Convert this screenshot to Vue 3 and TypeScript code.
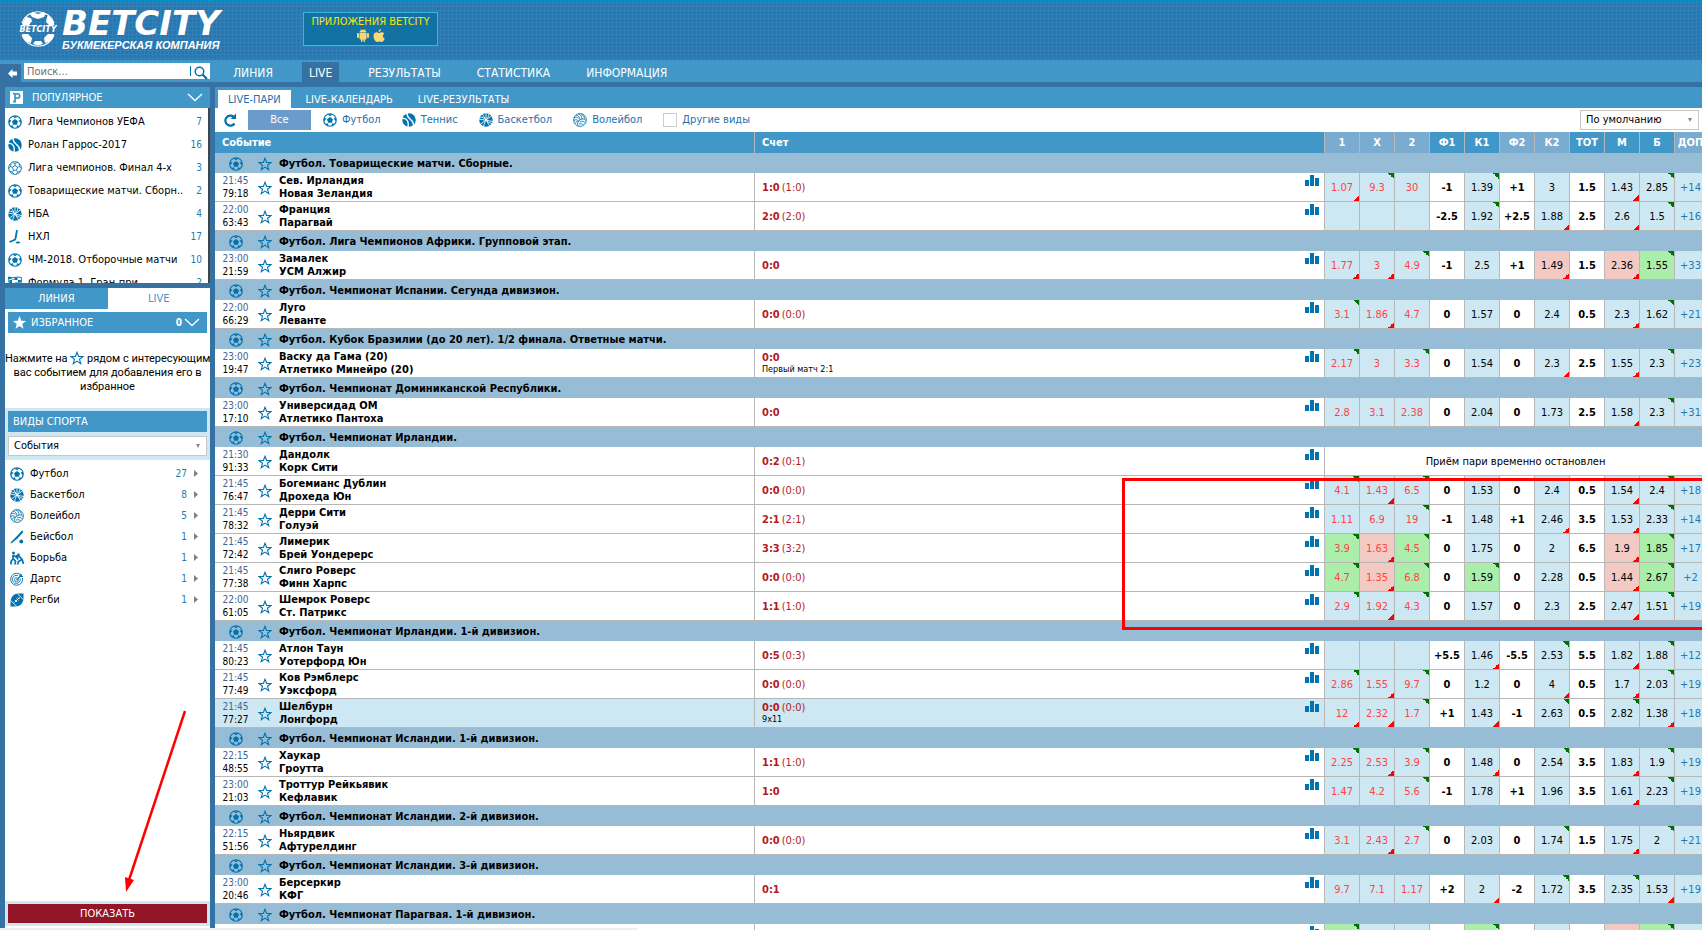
<script setup lang="ts">
import { ref } from 'vue'

type Mark = '' | 'up' | 'down'
type Tone = '' | 'rise' | 'fall'
interface Odd { value: string; mark: Mark; tone: Tone }
interface Match {
  start: string
  clock: string
  home: string
  away: string
  score: string
  half: string
  note: string
  odds: Odd[]
  extra: string
  active: boolean
}
interface League { title: string; matches: Match[] }

// Each odd is "value" + flags: ^ up corner, v down corner, g green cell, p pink cell; "_" is an empty cell
function parseOdd(raw: string): Odd {
  return {
    value: raw.replace(/[\^vgp_]/g, ''),
    mark: raw.includes('^') ? 'up' : raw.includes('v') ? 'down' : '',
    tone: raw.includes('g') ? 'rise' : raw.includes('p') ? 'fall' : '',
  }
}

function match(times: string, home: string, away: string, score: string, odds: string, extra: string, note = '', active = false): Match {
  const [start = '', clock = ''] = times.split(' ')
  const [main = '', half = ''] = score.split(' ')
  return {
    start, clock, home, away, score: main, half, note, extra, active,
    odds: odds ? odds.split(' ').map(parseOdd) : [],
  }
}

const columns = ['1', 'X', '2', 'Ф1', 'К1', 'Ф2', 'К2', 'ТОТ', 'М', 'Б', 'ДОП']
const paleColumns = [0, 1, 2, 5, 6, 10]
const boldColumns = [3, 5, 7]

const leagues: League[] = [
  { title: 'Футбол. Товарищеские матчи. Сборные.', matches: [
    match('21:45 79:18', 'Сев. Ирландия', 'Новая Зеландия', '1:0 (1:0)', '1.07v 9.3^ 30 -1 1.39^ +1 3 1.5 1.43v 2.85^', '+14'),
    match('22:00 63:43', 'Франция', 'Парагвай', '2:0 (2:0)', '_ _ _ -2.5 1.92^ +2.5 1.88v 2.5 2.6v 1.5^', '+16'),
  ] },
  { title: 'Футбол. Лига Чемпионов Африки. Групповой этап.', matches: [
    match('23:00 21:59', 'Замалек', 'УСМ Алжир', '0:0', '1.77v 3v 4.9^ -1 2.5 +1 1.49vp 1.5 2.36vp 1.55^g', '+33'),
  ] },
  { title: 'Футбол. Чемпионат Испании. Сегунда дивизион.', matches: [
    match('22:00 66:29', 'Луго', 'Леванте', '0:0 (0:0)', '3.1^ 1.86v 4.7 0 1.57 0 2.4 0.5 2.3v 1.62^', '+21'),
  ] },
  { title: 'Футбол. Кубок Бразилии (до 20 лет). 1/2 финала. Ответные матчи.', matches: [
    match('23:00 19:47', 'Васку да Гама (20)', 'Атлетико Минейро (20)', '0:0', '2.17^ 3 3.3^ 0 1.54 0 2.3v 2.5 1.55v 2.3^', '+23', 'Первый матч 2:1'),
  ] },
  { title: 'Футбол. Чемпионат Доминиканской Республики.', matches: [
    match('23:00 17:10', 'Универсидад ОМ', 'Атлетико Пантоха', '0:0', '2.8 3.1 2.38 0 2.04 0 1.73 2.5 1.58v 2.3^', '+31'),
  ] },
  { title: 'Футбол. Чемпионат Ирландии.', matches: [
    match('21:30 91:33', 'Дандолк', 'Корк Сити', '0:2 (0:1)', '', ''),
    match('21:45 76:47', 'Богемианс Дублин', 'Дрохеда Юн', '0:0 (0:0)', '4.1^ 1.43v 6.5^ 0 1.53 0 2.4 0.5 1.54v 2.4^', '+18'),
    match('21:45 78:32', 'Дерри Сити', 'Голуэй', '2:1 (2:1)', '1.11 6.9 19^ -1 1.48 +1 2.46v 3.5 1.53v 2.33^', '+14'),
    match('21:45 72:42', 'Лимерик', 'Брей Уондерерс', '3:3 (3:2)', '3.9^g 1.63vp 4.5^g 0 1.75 0 2 6.5 1.9vp 1.85^g', '+17'),
    match('21:45 77:38', 'Слиго Роверс', 'Финн Харпс', '0:0 (0:0)', '4.7^g 1.35vp 6.8^g 0 1.59^g 0 2.28 0.5 1.44vp 2.67^g', '+2'),
    match('22:00 61:05', 'Шемрок Роверс', 'Ст. Патрикс', '1:1 (1:0)', '2.9^ 1.92v 4.3^ 0 1.57 0 2.3 2.5 2.47v 1.51^', '+19'),
  ] },
  { title: 'Футбол. Чемпионат Ирландии. 1-й дивизион.', matches: [
    match('21:45 80:23', 'Атлон Таун', 'Уотерфорд Юн', '0:5 (0:3)', '_ _ _ +5.5 1.46v -5.5 2.53^ 5.5 1.82v 1.88^', '+12'),
    match('21:45 77:49', 'Ков Рэмблерс', 'Уэксфорд', '0:0 (0:0)', '2.86^ 1.55v 9.7^ 0 1.2 0 4v 0.5 1.7v 2.03^', '+19'),
    match('21:45 77:27', 'Шелбурн', 'Лонгфорд', '0:0 (0:0)', '12v 2.32v 1.7^ +1 1.43v -1 2.63^ 0.5 2.82^ 1.38v', '+18', '9x11', true),
  ] },
  { title: 'Футбол. Чемпионат Исландии. 1-й дивизион.', matches: [
    match('22:15 48:55', 'Хаукар', 'Гроутта', '1:1 (1:0)', '2.25^ 2.53v 3.9^ 0 1.48v 0 2.54^ 3.5 1.83v 1.9^', '+19'),
    match('23:00 21:03', 'Троттур Рейкьявик', 'Кефлавик', '1:0', '1.47 4.2 5.6^ -1 1.78 +1 1.96 3.5 1.61v 2.23^', '+19'),
  ] },
  { title: 'Футбол. Чемпионат Исландии. 2-й дивизион.', matches: [
    match('22:15 51:56', 'Ньярдвик', 'Афтурелдинг', '0:0 (0:0)', '3.1 2.43v 2.7^ 0 2.03 0 1.74^ 1.5 1.75v 2^', '+21'),
  ] },
  { title: 'Футбол. Чемпионат Исландии. 3-й дивизион.', matches: [
    match('23:00 20:46', 'Берсеркир', 'КФГ', '0:1', '9.7 7.1 1.17 +2 2v -2 1.72^ 3.5 2.35^ 1.53v', '+19'),
  ] },
  { title: 'Футбол. Чемпионат Парагвая. 1-й дивизион.', matches: [
    match('', '', '', '', '_^g _ _ _ _^g _ _ _ _p _^g', ''),
  ] },
]

const menu = ['ЛИНИЯ', 'LIVE', 'РЕЗУЛЬТАТЫ', 'СТАТИСТИКА', 'ИНФОРМАЦИЯ']
const liveTabs = ['LIVE-ПАРИ', 'LIVE-КАЛЕНДАРЬ', 'LIVE-РЕЗУЛЬТАТЫ']
const filters = [
  { icon: 'football', name: 'Футбол' },
  { icon: 'tennis', name: 'Теннис' },
  { icon: 'basketball', name: 'Баскетбол' },
  { icon: 'volleyball', name: 'Волейбол' },
]
const popular = [
  { icon: 'football', name: 'Лига Чемпионов УЕФА', count: 7 },
  { icon: 'tennis', name: 'Ролан Гаррос-2017', count: 16 },
  { icon: 'handball', name: 'Лига чемпионов. Финал 4-х', count: 3 },
  { icon: 'football', name: 'Товарищеские матчи. Сборн..', count: 2 },
  { icon: 'basketball', name: 'НБА', count: 4 },
  { icon: 'hockey', name: 'НХЛ', count: 17 },
  { icon: 'football', name: 'ЧМ-2018. Отборочные матчи', count: 10 },
  { icon: 'flag', name: 'Формула 1. Гран-при', count: 2 },
]
const sports = [
  { icon: 'football', name: 'Футбол', count: 27 },
  { icon: 'basketball', name: 'Баскетбол', count: 8 },
  { icon: 'volleyball', name: 'Волейбол', count: 5 },
  { icon: 'baseball', name: 'Бейсбол', count: 1 },
  { icon: 'wrestling', name: 'Борьба', count: 1 },
  { icon: 'darts', name: 'Дартс', count: 1 },
  { icon: 'rugby', name: 'Регби', count: 1 },
]

const query = ref('')
const otherSports = ref(false)
</script>

<template>
  <div class="page">
    <svg class="sprite" aria-hidden="true">
      <symbol id="i-football" viewBox="0 0 28 28">
        <circle cx="14" cy="14" r="12.6" fill="none" stroke="currentColor" stroke-width="2.200" />
        <path fill="currentColor" d="M14 8l6 4.500-2.200 7h-7.600L8 12.500zM8 2.400h12l-6 4zM1.500 9.500l5.500 1.300-4.500 6zM26.500 9.500l-5.500 1.300 4.500 6zM4.500 22l5.600-1.700.8 6zM23.500 22l-5.600-1.700-.8 6z" />
      </symbol>
      <symbol id="i-tennis" viewBox="0 0 28 28">
        <circle cx="14" cy="14" r="13.500" fill="currentColor" />
        <path fill="none" stroke="#fff" stroke-width="2.800" d="M10 0c0 7 2 9 6 12s8 7 7 14M0 11c6-1 9 1 11 5s2 7 1 12" />
      </symbol>
      <symbol id="i-basketball" viewBox="0 0 28 28">
        <circle cx="14" cy="14" r="13.500" fill="currentColor" />
        <path fill="none" stroke="#fff" stroke-width="1.700" d="M6 1l16 26M26 5L2 23M14 0v12M0 12l28 5M9 28c1-6 3-10 5-14M20 2c-1 5-3 9-6 12M1 8c6 0 10 2 13 6M27 21c-6-1-10-3-13-7" />
      </symbol>
      <symbol id="i-volleyball" viewBox="0 0 28 28">
        <g fill="none" stroke="currentColor" stroke-width="1.700">
          <circle cx="14" cy="14" r="12.800" />
          <path d="M14 14c0-5-3-9-8-10M14 14c4-3 9-3 12 1M14 14c-4 2-6 7-4 12M11 1.500c5 2 7 6 7 11M16 1.500c5 3 7 6 7 10M2 10c3-2 6-2 9 .5M1.500 15c4-2 7-2 10 1M25 20c-4-4-7-4-11-2M21 24c-2-3-5-3-9-2M4 21c1-2 3-4 6-5" />
        </g>
      </symbol>
      <symbol id="i-handball" viewBox="0 0 28 28">
        <g fill="none" stroke="currentColor" stroke-width="1.700">
          <circle cx="14" cy="14" r="12.800" />
          <path d="M14 9l5 3.500-2 6h-6l-2-6zM14 9V5M19 12.500l4-1.500M17 18.500l2.500 4M11 18.500l-2.500 4M9 12.500L5 11M14 5L9 3M14 5l5-2M23 11l-1-6M23 11l3.500 4M5 11L6 5M5 11l-3.500 4M8.500 22.500L3 20M8.500 22.500L12 26M19.500 22.500L25 20M19.500 22.500L16 26" />
        </g>
      </symbol>
      <symbol id="i-hockey" viewBox="0 0 28 28">
        <path fill="none" stroke="currentColor" stroke-width="3.600" stroke-linejoin="round" d="M18 0l-3 17c-.6 2.500-2 3.500-4 3.500L3 24" />
        <ellipse cx="20" cy="25" rx="4.500" ry="2.200" fill="currentColor" />
      </symbol>
      <symbol id="i-flag" viewBox="0 0 28 28">
        <path fill="currentColor" d="M1 2h6v5h6V3h6v5h7v5h-5v5h5v5h-6v-5h-7v5H7v-4H3V8h5v6h6V8H7V6H1zM14 13h6V8h-6z" />
        <path fill="none" stroke="currentColor" stroke-width="1.800" d="M1 2c9 4 16-2 26 1l-1 19c-8-2-12 3-20 0L3 28z" />
      </symbol>
      <symbol id="i-baseball" viewBox="0 0 28 28">
        <path fill="currentColor" d="M24 1c2 0 3 2 2 4L15 17 5 25l-2 2-2-2 2-2L13 13z" />
        <circle cx="22.500" cy="23" r="3.800" fill="currentColor" />
      </symbol>
      <symbol id="i-wrestling" viewBox="0 0 28 28">
        <circle cx="7" cy="4" r="3" fill="currentColor" />
        <circle cx="17" cy="8" r="2.800" fill="currentColor" />
        <path fill="none" stroke="currentColor" stroke-width="3.400" stroke-linejoin="round" d="M6 8v8l-4 5v6M6 15l5 5-1 7M7 9l7 4 2 4M19 11l5 6-7 4-2 6M24 16l3 10M12 9l7 3" />
      </symbol>
      <symbol id="i-darts" viewBox="0 0 28 28">
        <g fill="none" stroke="currentColor" stroke-width="1.800">
          <path d="M18 3.500A12 12 0 1 0 25 12" />
          <path d="M16 7.500A8 8 0 1 0 20.500 13M14 11.500a4 4 0 1 0 3 3.500" />
          <path stroke-width="2.400" d="M13 16L24 5M20 3v6h6" />
        </g>
      </symbol>
      <symbol id="i-rugby" viewBox="0 0 28 28">
        <path fill="currentColor" d="M17 1h10v10C26 21 20 27 11 27H1V17C2 7 8 1 17 1z" />
        <path fill="none" stroke="#fff" stroke-width="1.700" d="M15 1.500L26.500 13M1.500 15L13 26.500M9 19L19 9M10 14l4 4M13 11l4 4M16 9l3 3" />
      </symbol>
      <symbol id="i-star" viewBox="0 0 28 28">
        <path fill="none" stroke="currentColor" stroke-width="2.200" d="M14 2.500l3.200 8.300 8.800.3-7 5.500 2.500 8.600L14 20.200l-7.500 5 2.500-8.600-7-5.500 8.800-.3z" />
      </symbol>
      <symbol id="i-bars" viewBox="0 0 14 11">
        <path fill="currentColor" d="M0 5h4v6H0zM5 0h4v11H5zM10 3h4v8h-4z" />
      </symbol>
      <symbol id="i-chevron" viewBox="0 0 16 9">
        <path fill="none" stroke="currentColor" stroke-width="1.300" d="M1 1l7 6.500L15 1" />
      </symbol>
    </svg>

    <header class="top">
      <a class="brand" href="#">
        <svg class="globe" viewBox="0 0 36 36" aria-hidden="true">
          <path fill="none" stroke="#fff" stroke-width="1.200" d="M2 12A17 17 0 0 1 34 12M2 24A17 17 0 0 0 34 24" />
          <path fill="#fff" d="M13 1.500L18 3l5-1.500 3 1-2 3.500-6 2-6-2-2-3zM28 4l5 6 1.500 4-4.500 1-4-4 1-5zM2 13l4-7 5 1 1 3-3 4-5 1zM2 23h6l4 4-1 5-4-1-4-4zM34 23h-6l-4 4 1 5 4-1 4-4zM13 33l2-3h6l2 3-5 1.500z" />
          <text x="18" y="21" text-anchor="middle">BETCITY</text>
        </svg>
        <span class="brand-words">
          <span class="brand-name">BETCITY</span>
          <span class="brand-sub">БУКМЕКЕРСКАЯ КОМПАНИЯ</span>
        </span>
      </a>
      <a class="apps" href="#">
        <span>ПРИЛОЖЕНИЯ BETCITY</span>
        <span class="app-icons">
          <svg width="12" height="13" viewBox="0 0 24 26" aria-hidden="true">
            <path fill="currentColor" d="M5 8h14v11a2 2 0 0 1-2 2h-1v3.500a1.500 1.500 0 0 1-3 0V21h-2v3.500a1.500 1.500 0 0 1-3 0V21H7a2 2 0 0 1-2-2zM0 10a2 2 0 0 1 4 0v6a2 2 0 0 1-4 0zM20 10a2 2 0 0 1 4 0v6a2 2 0 0 1-4 0zM5 7c0-2 1-3.500 3-4.500L7 .5 8 0l1.300 2c1.700-.5 3.700-.5 5.400 0L16 0l1 .5-1 2c2 1 3 2.500 3 4.500z" />
          </svg>
          <svg width="12" height="13" viewBox="0 0 24 26" aria-hidden="true">
            <path fill="currentColor" d="M16 0c.3 3-2 6-5 6 0-3 2-5.500 5-6zM12 8c1.500 0 3-1.500 5.500-1.500 2 0 4 1 5 3-4 2.500-3.500 8 1 9.500-1 3-3.500 7-6 7-2 0-2.500-1-4.500-1s-3 1-4.500 1C5 26 1 19.500 1 14.500c0-5 3-8 6.500-8 2 0 3.500 1.500 4.500 1.500z" />
          </svg>
        </span>
      </a>
    </header>

    <div class="menu-bar">
      <div class="menu-left">
        <button class="collapse" type="button" aria-label="Свернуть">
          <svg width="9" height="9" viewBox="0 0 18 18" aria-hidden="true"><path fill="#fff" d="M0 9l9-9v5h9v8H9v5z" /></svg>
        </button>
        <form class="search" @submit.prevent>
          <input v-model="query" type="text" placeholder="Поиск..." aria-label="Поиск">
          <button type="submit" aria-label="Найти">
            <svg width="14" height="14" viewBox="0 0 28 28" aria-hidden="true">
              <circle cx="11" cy="11" r="8.500" fill="none" stroke="currentColor" stroke-width="3" />
              <path stroke="currentColor" stroke-width="4.500" d="M17 17l9 9" />
            </svg>
          </button>
        </form>
      </div>
      <nav class="menu">
        <a v-for="item in menu" :key="item" href="#" :class="{ current: item === 'LIVE' }">{{ item }}</a>
      </nav>
    </div>

    <div class="body">
      <aside class="side">
        <section class="popular">
          <h2 class="bar">
            <svg class="bar-icon" viewBox="0 0 26 26" aria-hidden="true">
              <path fill="#fff" d="M0 0h26v26H0z" />
              <path fill="none" stroke="#4198c8" stroke-width="3.500" d="M6 5h3M6 21h6M10 4v17M10 5.500h5c6 0 6 8.500 0 8.500h-5" />
            </svg>
            <span class="grow">ПОПУЛЯРНОЕ</span>
            <svg width="16" height="9" aria-hidden="true"><use href="#i-chevron" /></svg>
          </h2>
          <ul class="popular-list">
            <li v-for="item in popular" :key="item.name">
              <a href="#">
                <svg class="ico" aria-hidden="true"><use :href="`#i-${item.icon}`" /></svg>
                <span class="grow">{{ item.name }}</span>
                <span class="count">{{ item.count }}</span>
              </a>
            </li>
          </ul>
        </section>

        <section class="panel">
          <div class="switch">
            <button class="on" type="button">ЛИНИЯ</button>
            <button type="button">LIVE</button>
          </div>
          <h2 class="bar inset">
            <svg class="bar-icon" viewBox="0 0 26 26" aria-hidden="true">
              <path fill="#fff" d="M13 0l3.500 9.500L26 10l-7.500 6L21 25.500l-8-5.500-8 5.500L7.500 16 0 10l9.500-.5z" />
            </svg>
            <span class="grow">ИЗБРАННОЕ</span>
            <span class="fav-count">0</span>
            <svg width="16" height="9" aria-hidden="true"><use href="#i-chevron" /></svg>
          </h2>
          <p class="hint">
            Нажмите на <svg class="ico inline" aria-hidden="true"><use href="#i-star" /></svg> рядом с интересующим<br>вас событием для добавления его в<br>избранное
          </p>
          <div class="tint">
            <h2 class="bar">ВИДЫ СПОРТА</h2>
            <label class="select">
              <select aria-label="События"><option>События</option></select>
            </label>
          </div>
          <ul class="sports">
            <li v-for="item in sports" :key="item.name">
              <a href="#">
                <svg class="ico" aria-hidden="true"><use :href="`#i-${item.icon}`" /></svg>
                <span class="grow">{{ item.name }}</span>
                <span class="count">{{ item.count }}</span>
                <svg width="4" height="7" viewBox="0 0 4 7" aria-hidden="true"><path fill="#808080" d="M0 0l4 3.500L0 7z" /></svg>
              </a>
            </li>
          </ul>
          <div class="show"><button type="button">ПОКАЗАТЬ</button></div>
        </section>
      </aside>

      <main class="main">
        <nav class="tabs">
          <a v-for="(tab, i) in liveTabs" :key="tab" href="#" :class="{ on: i === 0 }">{{ tab }}</a>
        </nav>
        <div class="filters">
          <button class="refresh" type="button" aria-label="Обновить">
            <svg width="13" height="14" viewBox="0 0 26 28" aria-hidden="true">
              <path fill="none" stroke="currentColor" stroke-width="4.500" d="M23 21A10 10 0 1 1 21 7.500" />
              <path fill="currentColor" d="M26 1v11H15z" />
            </svg>
          </button>
          <button class="all" type="button">Все</button>
          <a v-for="item in filters" :key="item.name" href="#">
            <svg class="ico" aria-hidden="true"><use :href="`#i-${item.icon}`" /></svg>
            {{ item.name }}
          </a>
          <label class="other"><input v-model="otherSports" type="checkbox">Другие виды</label>
          <label class="select sort">
            <select aria-label="Сортировка"><option>По умолчанию</option></select>
          </label>
        </div>

        <table class="odds">
          <colgroup>
            <col class="c-event">
            <col>
            <col v-for="n in 10" :key="n" class="c-odd">
            <col class="c-more">
          </colgroup>
          <thead>
            <tr>
              <th class="left" scope="col">Событие</th>
              <th class="left" scope="col">Счет</th>
              <th v-for="(c, i) in columns" :key="c" scope="col" :class="{ pale: paleColumns.includes(i) }">{{ c }}</th>
            </tr>
          </thead>
          <tbody v-for="league in leagues" :key="league.title">
            <tr class="league">
              <th colspan="13" scope="rowgroup">
                <div class="event">
                  <span class="times"><svg class="ico" aria-hidden="true"><use href="#i-football" /></svg></span>
                  <button class="star" type="button" aria-label="В избранное"><svg class="ico" aria-hidden="true"><use href="#i-star" /></svg></button>
                  <span>{{ league.title }}</span>
                </div>
              </th>
            </tr>
            <tr v-for="(m, i) in league.matches" :key="i" class="match" :class="{ active: m.active }">
              <td>
                <div class="event">
                  <span class="times"><span class="start">{{ m.start }}</span><span>{{ m.clock }}</span></span>
                  <button class="star" type="button" aria-label="В избранное"><svg class="ico" aria-hidden="true"><use href="#i-star" /></svg></button>
                  <a class="teams" href="#"><span>{{ m.home }}</span><span>{{ m.away }}</span></a>
                </div>
              </td>
              <td>
                <div class="score">
                  <div class="result">
                    <div><b>{{ m.score }}</b><span>{{ m.half }}</span></div>
                    <small v-if="m.note">{{ m.note }}</small>
                  </div>
                  <svg class="bars" width="14" height="11" aria-hidden="true"><use href="#i-bars" /></svg>
                </div>
              </td>
              <template v-if="m.odds.length">
                <td
                  v-for="(o, k) in m.odds"
                  :key="k"
                  class="odd"
                  :class="[{ win: k < 3, param: boldColumns.includes(k) }, o.mark, o.tone]"
                >{{ o.value }}</td>
                <td class="odd more"><a href="#">{{ m.extra }}</a></td>
              </template>
              <td v-else class="stopped" colspan="11">Приём пари временно остановлен</td>
            </tr>
          </tbody>
        </table>
      </main>
    </div>

    <div class="frame" aria-hidden="true"></div>
    <svg class="pointer" width="66" height="184" viewBox="0 0 66 184" aria-hidden="true">
      <path stroke="#f00" stroke-width="2.500" d="M62 1L6 170" />
      <path fill="#f00" d="M3 182L2 167l9 3z" />
    </svg>
    <div class="status" aria-hidden="true"></div>
  </div>
</template>

<style>
body {
  margin: 0;
  overflow: hidden;
}
</style>

<style scoped>
.page {
  position: relative;
  display: flex;
  flex-direction: column;
  height: 100vh;
  overflow: hidden;
  background: #3671a3;
  color: #000;
  font-family: "DejaVu Sans Condensed", "Noto Sans", sans-serif;
  font-size: 11px;
  line-height: 14px;
}
.page * { box-sizing: border-box; }
.sprite { position: absolute; width: 0; height: 0; }
a { color: inherit; text-decoration: none; }
button, input, select { font: inherit; margin: 0; padding: 0; border: 0; }
button { cursor: pointer; background: none; color: inherit; }
ul { list-style: none; margin: 0; padding: 0; }
.grow { flex: 1; min-width: 0; white-space: nowrap; }
.ico { width: 14px; height: 14px; flex: none; color: #0073b0; display: block; }

.top {
  flex: none;
  display: flex;
  align-items: flex-start;
  height: 60px;
  border-top: 2px solid #0090c8;
  background-color: #3671a8;
  background-image:
    linear-gradient(#2d82b9 1px, transparent 1px),
    linear-gradient(90deg, #2d82b9 1px, transparent 1px);
  background-size: 4px 4px;
}
.brand { display: flex; width: 303px; padding: 5px 0 0 20px; color: #fff; }
.globe { width: 36px; height: 36px; margin: 4px 6px 0 0; overflow: visible; }
.globe text { font: italic bold 8px "DejaVu Sans", sans-serif; fill: #fff; }
.brand-words { display: flex; flex-direction: column; }
.brand-name { font: italic bold 34px/32px "DejaVu Sans", sans-serif; }
.brand-sub { font: italic bold 11px/12px "Liberation Sans", sans-serif; }
.apps {
  display: flex;
  flex-direction: column;
  align-items: center;
  width: 135px;
  height: 34px;
  margin-top: 10px;
  padding-top: 2px;
  border: 1px solid #3fb4dc;
  background: #1273a2;
  color: #f9e40c;
  white-space: nowrap;
}
.app-icons { display: flex; gap: 4px; color: #fbd874; }

.menu-bar { flex: none; display: flex; height: 22px; background: #4198c8; }
.menu-left { display: flex; width: 226px; }
.collapse { display: grid; place-items: center; width: 21px; height: 18px; margin-top: 4px; padding-left: 4px; background: #3671a3; }
.search { display: flex; width: 186px; height: 16px; margin: 3px 0 0 3px; background: #fff; }
.search input { flex: 1; min-width: 0; padding: 2px 0 0 3px; outline: 0; background: #fff; }
.search input::placeholder { color: #707070; opacity: 1; }
.search button { display: grid; place-items: center; width: 20px; height: 10px; margin-top: 3px; border-left: 1px solid #0073b0; color: #0073b0; }
.menu { display: flex; gap: 22px; padding-top: 2px; color: #fff; font-size: 12px; line-height: 22px; }
.menu a { height: 20px; padding: 0 7px; }
.menu .current { background: #3671a3; }

.body { flex: 1; display: flex; gap: 5px; min-height: 0; padding: 5px 0 0 5px; }
.side { display: flex; flex-direction: column; flex: none; width: 205px; gap: 5px; }
.bar {
  display: flex;
  align-items: center;
  height: 21px;
  margin: 0;
  padding: 0 7px 0 5px;
  background: #4198c8;
  color: #fff;
  font-size: 11px;
  font-weight: normal;
}
.bar-icon { width: 13px; height: 13px; margin-right: 9px; }
.popular { flex: none; height: 196px; overflow: hidden; background: #fff; }
.popular-list { padding-top: 2px; border-right: 2px solid #444; }
.popular-list a { display: flex; align-items: center; gap: 6px; height: 23px; padding: 0 6px 0 3px; }
.count { color: #1f7ab4; font-size: 10px; }
.panel { flex: 1; display: flex; flex-direction: column; min-height: 0; margin-bottom: 2px; background: #fff; }
.switch { display: flex; height: 21px; }
.switch button { flex: 1; color: #4198c8; }
.switch .on { background: #4198c8; color: #fff; }
.inset { margin: 3px 3px 0; }
.inset .bar-icon { margin-right: 5px; }
.fav-count { font-weight: bold; font-size: 10px; margin-right: 2px; }
.hint { margin: 0; padding: 18px 0 14px; text-align: center; white-space: nowrap; font-family: Roboto, sans-serif; }
.inline { display: inline-block; vertical-align: -3px; }
.tint { display: flex; flex-direction: column; gap: 4px; padding: 3px 3px 4px; background: #cee8f3; }
.select { position: relative; display: flex; }
.select select {
  appearance: none;
  width: 100%;
  height: 20px;
  padding-left: 5px;
  border: 1px solid #c8c8c8;
  border-radius: 0;
  background: #fff;
  color: #000;
}
.select::after {
  content: "";
  position: absolute;
  right: 7px;
  top: 8px;
  border: 2px solid transparent;
  border-top: 4px solid #888;
}
.sports { flex: 1; padding-top: 3px; }
.sports a { display: flex; align-items: center; gap: 6px; height: 21px; padding: 0 12px 0 5px; }
.sports .count { margin-right: 1px; }
.show { margin-bottom: 2px; padding: 3px; background: #cee8f3; }
.show button { display: block; width: 100%; height: 19px; padding-top: 1px; background: #921528; color: #fff; }

.main { flex: 1; min-width: 0; overflow: hidden; background: #fff; }
.tabs { display: flex; gap: 5px; height: 21px; padding: 3px 3px 0; background: #4198c8; color: #fff; line-height: 19px; }
.tabs a { height: 18px; padding: 0 10px; }
.tabs .on { background: #fff; color: #1f6fa8; }
.filters { display: flex; align-items: center; gap: 21px; height: 24px; padding: 0 3px 0 8px; color: #1f70ac; }
.filters a, .other { display: flex; align-items: center; gap: 5px; }
.refresh { display: flex; color: #0073b0; }
.all { width: 63px; height: 20px; margin: 0 -9px; background: #6b9bca; color: #fff; }
.other input { appearance: none; width: 14px; height: 14px; border: 1px solid #ccc; background: #fff; }
.sort { width: 119px; margin-left: auto; }

/* the last column runs a little past the window's right edge */
.odds { width: calc(100% + 5px); table-layout: fixed; border-collapse: separate; border-spacing: 0; }
.c-event { width: 540px; }
.c-odd { width: 35px; }
.c-more { width: 32px; }
.odds th, .odds td { padding: 0; }
.odds thead th { height: 21px; padding-top: 1px; border-right: 1px solid #b7b7b7; background: #4198c8; color: #fff; }
.odds thead .left { padding-left: 7px; text-align: left; }
.odds thead .pale { background: #7aabd0; }
.odds .league th { height: 20px; padding-top: 1px; background: #97bdd6; text-align: left; font-size: 11px; }
.match td { height: 29px; border-right: 1px solid #b7b7b7; border-bottom: 1px solid #b7b7b7; line-height: 13px; }
.active { background: #cee8f3; }
.event { display: flex; align-items: center; }
.times { display: flex; flex-direction: column; align-items: center; width: 41px; font-size: 10px; }
.start { color: #3d6596; }
.star { width: 14px; margin: 0 7px 0 2px; }
.match .star { padding-top: 2px; }
.teams { display: flex; flex-direction: column; font-weight: bold; }
.score { display: flex; align-items: center; justify-content: space-between; height: 28px; padding: 0 5px 0 7px; color: #b5191e; }
.result b { margin-right: 2px; }
.result small { display: block; color: #000; font-size: 9px; line-height: 11px; }
.bars { align-self: flex-start; margin-top: 2px; color: #0073b0; }
.odd { background: #cee8f3 no-repeat; text-align: center; }
.win { color: #ff4343; }
.param { background-color: #fff; font-weight: bold; }
.rise { background-color: #abeeab; }
.fall { background-color: #f3c9c3; }
.up { background-image: linear-gradient(to bottom left, #007000 50%, transparent 50%); background-size: 6px 6px; background-position: right top; }
.down { background-image: linear-gradient(to top left, #f00 50%, transparent 50%); background-size: 6px 6px; background-position: right bottom; }
.more { color: #1f7ab4; }
.stopped { text-align: center; }

.frame { position: absolute; left: 1122px; right: -3px; top: 478px; height: 152px; border: 3px solid #f00; }
.pointer { position: absolute; left: 123px; top: 710px; }
.status { position: absolute; left: 0; bottom: 0; width: 638px; height: 2px; border-top-right-radius: 2px; background: #efefef; }
</style>
